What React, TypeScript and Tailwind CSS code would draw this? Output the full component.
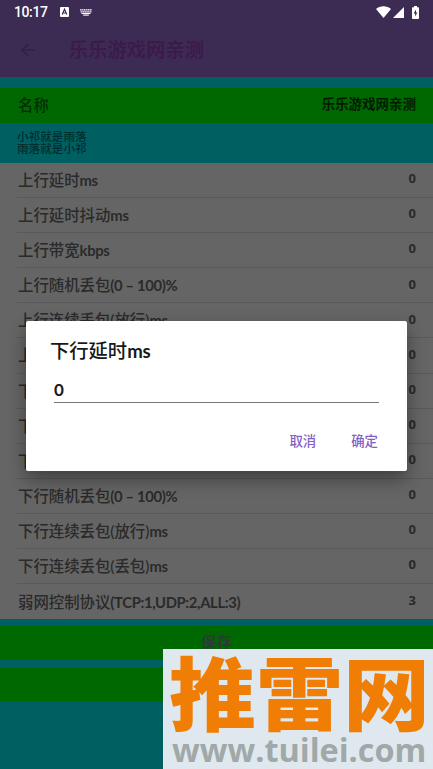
/**
 * 弱网参数设置页
 */

import { ArrowLeft } from 'lucide-react';

interface Param {
  label: string;
  unit?: string;
  value: number;
}

const params: Param[] = [
  { label: '上行延时', unit: 'ms', value: 0 },
  { label: '上行延时抖动', unit: 'ms', value: 0 },
  { label: '上行带宽', unit: 'kbps', value: 0 },
  { label: '上行随机丢包', unit: '(0 – 100)%', value: 0 },
  { label: '上行连续丢包(放行)', unit: 'ms', value: 0 },
  { label: '上行连续丢包(丢包)', unit: 'ms', value: 0 },
  { label: '下行延时', unit: 'ms', value: 0 },
  { label: '下行延时抖动', unit: 'ms', value: 0 },
  { label: '下行带宽', unit: 'kbps', value: 0 },
  { label: '下行随机丢包', unit: '(0 – 100)%', value: 0 },
  { label: '下行连续丢包(放行)', unit: 'ms', value: 0 },
  { label: '下行连续丢包(丢包)', unit: 'ms', value: 0 },
  { label: '弱网控制协议', unit: '(TCP:1,UDP:2,ALL:3)', value: 3 },
];

function StatusBar() {
  return (
    <div className="flex h-6 items-center pl-[14px] pr-[14px] text-white">
      <span className="w-[34px] whitespace-nowrap font-['Roboto',sans-serif] text-[14px] font-medium leading-6 tracking-[-0.4px]">
        10:17
      </span>
      <svg className="ml-[12px] h-[10px] w-[9px]" viewBox="0 0 9 10">
        <rect width="9" height="10" rx="1" fill="#fff" />
        <path d="M2.2 7.6 4.5 2.3 6.8 7.6M3 6h3" fill="none" stroke="#3c2c53" strokeWidth="1.2" />
      </svg>
      <svg className="ml-[11px] h-[7px] w-[12px]" viewBox="0 0 12 7">
        <path d="M0 .9h12M.6 2.9h10.8" stroke="#fff" strokeWidth="1.4" strokeDasharray="1.5 .4" />
        <path d="M1.5 4.5h9" stroke="#fff" strokeWidth="1.1" />
        <path d="M3.2 6.1h5.6" stroke="#fff" strokeWidth="1.1" />
      </svg>
      <div className="ml-auto flex items-center">
        <svg className="h-[12px] w-[15px]" viewBox="0 0 15 12">
          <path d="M0 3C4.2-.7 10.8-.7 15 3L7.5 12z" fill="#fff" />
        </svg>
        <svg className="ml-[2px] h-[11px] w-[11px]" viewBox="0 0 11 11">
          <path d="M11 0v11H0z" fill="#fff" />
        </svg>
        <svg className="ml-[8px] h-[13px] w-[7px]" viewBox="0 0 7 13">
          <path d="M2 0h3v1.2h1.2q.8 0 .8.8v10q0 1-.8 1H.8q-.8 0-.8-1V2q0-.8.8-.8H2z" fill="#fff" />
          <path d="M4 3.5 1.6 7.5h1.5v3L5.4 6.4H4z" fill="#3c2c53" />
        </svg>
      </div>
    </div>
  );
}

function ParamRow({ label, unit, value }: Param) {
  return (
    <li className="ml-[17px] flex h-[35.1px] items-center justify-between border-b border-[#595959] pl-px pr-[17px] last:border-b-0">
      <span className="pt-px text-[15.4px] font-medium text-[#2a2a2a]">
        {label}
        <span className="text-[14.8px] font-bold tracking-[-0.35px]">{unit}</span>
      </span>
      <span className="pb-[2px] font-['Noto_Sans',sans-serif] text-[13px] font-bold text-[#2a2a2a]">
        {value}
      </span>
    </li>
  );
}

function EditDialog() {
  return (
    <div className="absolute left-[26px] top-[321.4px] flex h-[149.2px] w-[381px] flex-col rounded-[2px] bg-white pl-[24px] pr-[28px] shadow-[0_8px_18px_rgba(0,0,0,0.38)]">
      <h2 className="mt-[15px] text-[19.3px] font-medium leading-[29px] text-[#191919]">
        下行延时<span className="text-[18.6px] font-bold tracking-[-0.3px]">ms</span>
      </h2>
      <div className="ml-[4px] mt-[9px] h-[28px] border-b border-[#777] text-[17px] font-bold leading-[29px] text-[#191919]">
        0
      </div>
      <div className="mr-px mt-[27px] flex justify-end gap-[35px] text-[13.4px] font-medium leading-[22px] text-[#8560c4]">
        <button>取消</button>
        <button>确定</button>
      </div>
    </div>
  );
}

function Watermark() {
  return (
    <div className="absolute left-[163px] top-[649px] h-[120px] w-[270px] overflow-hidden bg-[#dfe8ee]">
      <div className="ml-[6px] h-[84px] origin-top scale-y-[0.91] whitespace-nowrap font-['Noto_Sans_CJK_SC',sans-serif] text-[87px] font-black leading-[89px] text-[#f07d04]">
        推雷网
      </div>
      <div className="ml-[9px] whitespace-nowrap font-['Open_Sans',sans-serif] text-[32.4px] font-bold leading-[33px] text-[#a0a8a8]">
        www.tuilei.com
      </div>
    </div>
  );
}

export default function App() {
  return (
    <div className="relative h-[769px] w-[433px] overflow-hidden bg-[#005f61] font-['Lato','Noto_Sans_CJK_SC',sans-serif]">
      {/* 头部 */}
      <header className="h-[77px] bg-[#3c2c53]">
        <StatusBar />
        <div className="flex h-[52px] items-center pl-[18px]">
          <ArrowLeft size={20} strokeWidth={2} color="#2f2344" />
          <h1 className="ml-[31px] text-[19.3px] font-bold text-[#3c1a4c]">乐乐游戏网亲测</h1>
        </div>
      </header>

      {/* 名称 */}
      <div className="mt-[11px] flex h-[34.5px] items-center justify-between bg-[#006800] pl-[18px] pr-[17px]">
        <span className="pt-px text-[15.4px] font-medium text-[#002f00]">名称</span>
        <span className="pb-[3px] text-[13.5px] font-bold text-[#001c00]">乐乐游戏网亲测</span>
      </div>
      <div className="h-[40.5px] pl-[17px] pt-[8px] text-[11.6px] font-medium leading-[12px] text-[#002d2e]">
        <p>小祁就是雨落</p>
        <p>雨落就是小祁</p>
      </div>

      {/* 参数列表 */}
      <ul className="bg-[#656565]">
        {params.map((param, index) => (
          <ParamRow key={index} {...param} />
        ))}
      </ul>

      <button className="mt-[7px] block h-[34px] w-full bg-[#006800] pb-px text-[15.4px] font-bold text-[#2c3a38]">
        保存
      </button>
      <button className="mt-[8px] block h-[33px] w-full bg-[#006800]" />

      <EditDialog />
      <Watermark />
    </div>
  );
}
